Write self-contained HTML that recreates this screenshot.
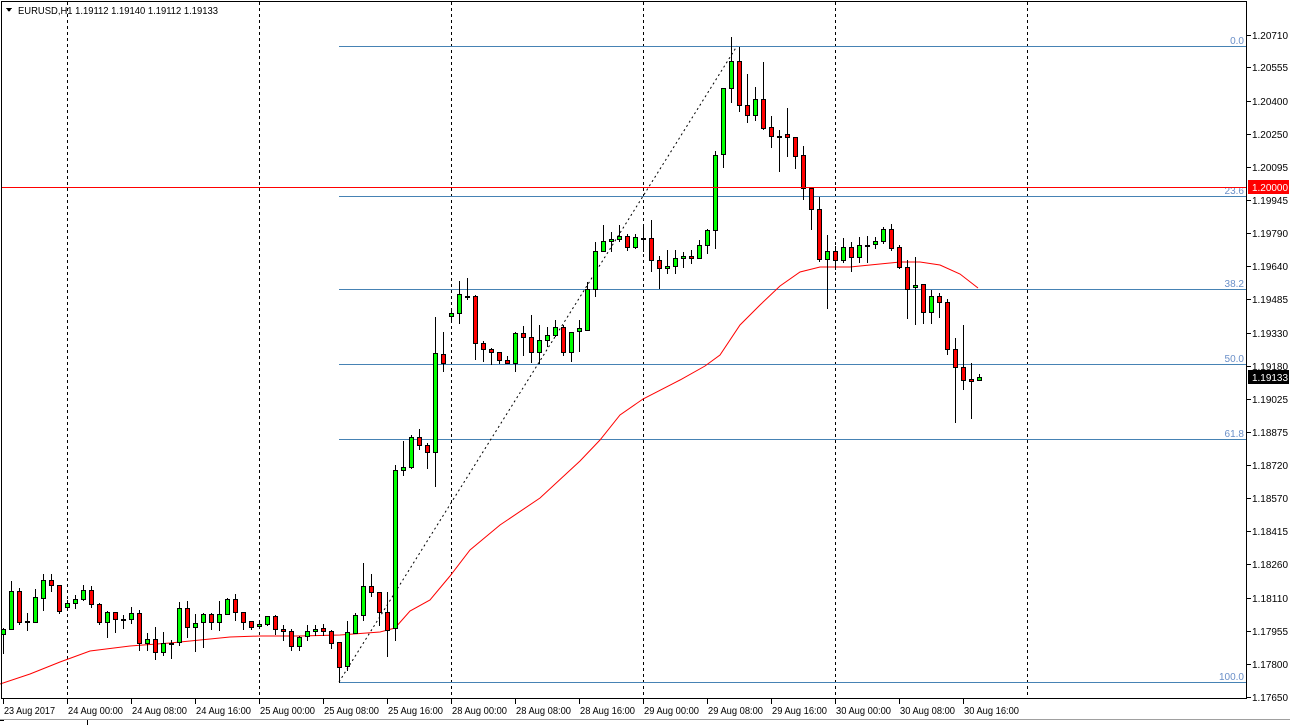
<!DOCTYPE html>
<html><head><meta charset="utf-8"><style>
html,body{margin:0;padding:0;background:#fff;width:1290px;height:725px;overflow:hidden}
svg{display:block;font-family:"Liberation Sans",sans-serif}
</style></head><body>
<svg id="c" width="1290" height="725" xmlns="http://www.w3.org/2000/svg" shape-rendering="crispEdges">
<rect width="1290" height="725" fill="#fff"/>
<g id="grid"></g>
<g id="fib"></g>
<polyline id="ma" fill="none" stroke="#f00" stroke-width="1" shape-rendering="auto"/>
<line x1="339" y1="682" x2="737" y2="46" stroke="#000" stroke-dasharray="2,3" shape-rendering="auto"/>
<g id="candles"></g>
<line x1="2" y1="187.5" x2="1246" y2="187.5" stroke="rgb(255,0,0)" stroke-width="1.2"/>
<rect x="1.5" y="1.5" width="1245" height="697" fill="none" stroke="#000"/>
<g id="axis" font-size="10" fill="#000"></g>
<text x="18" y="14" font-size="10" textLength="200" lengthAdjust="spacingAndGlyphs">EURUSD,H1  1.19112 1.19140 1.19112 1.19133</text>
<path d="M6 8 L12 8 L9 12 Z" fill="#000"/>
<line x1="0" y1="719.5" x2="1290" y2="719.5" stroke="#a0a0a0"/>
<line x1="87.5" y1="720" x2="87.5" y2="725" stroke="#000"/>
<line x1="0" y1="720.5" x2="4" y2="720.5" stroke="#000"/>
</svg>
<script>
var NS="http://www.w3.org/2000/svg";
function el(p,t,a,txt){var e=document.createElementNS(NS,t);for(var k in a)e.setAttribute(k,a[k]);if(txt!=null)e.textContent=txt;p.appendChild(e);return e;}
var grid=document.getElementById('grid');
[67,259,451,643,835,1027].forEach(function(x){el(grid,'line',{x1:x+.5,y1:2,x2:x+.5,y2:698,stroke:'#000','stroke-dasharray':'3,3'});});
var fib=document.getElementById('fib');
[[46,'0.0'],[196,'23.6'],[289,'38.2'],[364,'50.0'],[439,'61.8'],[682,'100.0']].forEach(function(f){
el(fib,'rect',{x:339,y:f[0],width:907,height:1,fill:'#4682B4'});
el(fib,'text',{x:1244,y:f[0]-2,'text-anchor':'end','font-size':'10',fill:'#6a8fc8'},f[1]);});
var ma=[[0,684],[30,674],[60,662],[90,651],[130,646],[170,643],[230,637],[260,636],[300,636],[340,635],[380,632],[395,628],[410,611],[430,600],[450,576],[470,550],[500,525],[540,498],[580,461],[600,440],[620,415],[643,399],[680,380],[705,366],[720,355],[740,325],[760,305],[780,286],[800,272],[820,267],[850,267],[870,265],[900,262],[920,262],[940,265],[960,274],[978,288]];
document.getElementById('ma').setAttribute('points',ma.map(function(p){return p.join(',')}).join(' '));
var D=[[634,629,628,653],[629,591,581,629],[591,622,588,624],[621,622,613,630],[622,597,589,622],[598,580,574,610],[580,585,574,591],[585,611,585,613],[607,603,600,610],[603,599,595,608],[599,590,585,600],[590,604,586,607],[604,622,603,624],[622,612,611,637],[612,619,612,632],[619,619.5,615,628],[619,613,607,623],[613,643,610,650],[643,639,633,650],[639,652,627,659],[652,643,632,655],[643,643.5,640,658],[642,608,602,645],[608,627,601,637],[627,623,614,651],[622,614,613,647],[614,622,613,629],[622,614,601,630],[614,599,598,614],[599,612,594,620],[612,622,612,629],[621,627,621,629],[626,624,622,628],[624,616,616,625],[616,629,615,634],[629,631,625,640],[631,646,629,650],[646,637,636,650],[636,631,625,640],[631,629,625,635],[628,631,624,635],[631,643,630,648],[642,667,642,682],[666,632,621,670],[633,615,613,633],[615,586,563,620],[586,592,574,596],[592,612,592,625],[612,630,592,656],[628,470,465,640],[470,467,441,475],[467,437,435,468],[437,445,429,449],[445,452,443,468],[452,353,317,486],[354,363,332,371],[316,313,310,322],[313,294,281,323],[296,296.5,278,299],[296,343,295,359],[343,349,341,361],[349,352,348,364],[352,360,352,363],[360,363,356,363],[363,333,332,371],[333,337,326,355],[337,352,315,362],[352,340,325,363],[340,335,327,346],[335,327,320,336],[327,352,325,355],[352,332,332,361],[331,328,320,351],[330,289,282,330],[289,251,242,296],[251,241,225,251],[241,239,232,251],[239,236,225,241],[236,247,234,250],[247,237,234,248],[238,238.5,224,251],[238,260,220,271],[260,268,256,288],[268,266,250,273],[266,258,250,273],[258,256,252,267],[256,258,250,263],[258,245,240,258],[245,230,229,253],[230,155,151,248],[154,88,88,167],[88,61,37,102],[61,105,47,111],[105,115,74,122],[115,99,87,120],[99,128,62,129],[127,136,116,147],[136,136.5,130,171],[134,137,108,156],[137,156,137,168],[155,188,146,199],[188,209,187,229],[209,259,197,261],[259,251,235,308],[251,260,246,269],[260,247,238,262],[247,257,242,271],[257,245,237,262],[245,245.5,236,262],[244,241,237,248],[241,229,227,243],[229,248,224,250],[247,267,245,268],[267,289,260,318],[287,285,257,324],[284,312,284,323],[312,296,290,323],[296,302,293,317],[302,349,299,354],[349,367,338,422],[367,380,325,389],[379,381,363,418],[380,377,374,380]];
var cg=document.getElementById('candles');
D.forEach(function(d,i){var cx=3+8*i;var o=d[0],c=d[1],h=d[2],l=d[3];
el(cg,'line',{x1:cx+.5,y1:h,x2:cx+.5,y2:l+1,stroke:'#000'});
var top=Math.round(Math.min(o,c)),bot=Math.round(Math.max(o,c));
if(bot-top<1){el(cg,'line',{x1:cx-2,y1:top+.5,x2:cx+3,y2:top+.5,stroke:'#000'});return;}
el(cg,'rect',{x:cx-1.5,y:top+.5,width:4,height:bot-top,fill:(c<o?'#00ff00':'#ff0000'),stroke:'#000'});});
var ax=document.getElementById('axis');
var L=['1.20710','1.20555','1.20400','1.20250','1.20095','1.19945','1.19790','1.19640','1.19485','1.19330','1.19180','1.19025','1.18875','1.18720','1.18570','1.18415','1.18260','1.18110','1.17955','1.17800','1.17650'];
var Y=[35,67,101,134,167,200,233,266,299,333,366,399,432,465,498,531,564,598,631,664,697];
L.forEach(function(t,i){el(ax,'line',{x1:1247,y1:Y[i]+.5,x2:1251,y2:Y[i]+.5,stroke:'#000'});el(ax,'text',{x:1252,y:Y[i]+4,textLength:36,lengthAdjust:'spacingAndGlyphs'},t);});
el(ax,'rect',{x:1248,y:180,width:41,height:14,fill:'#f00'});
el(ax,'text',{x:1252,y:191,fill:'#fff',textLength:36,lengthAdjust:'spacingAndGlyphs'},'1.20000');
el(ax,'rect',{x:1248,y:370,width:41,height:14,fill:'#000'});
el(ax,'text',{x:1252,y:381,fill:'#fff',textLength:36,lengthAdjust:'spacingAndGlyphs'},'1.19133');
var B=[[3,'23 Aug 2017'],[67,'24 Aug 00:00'],[131,'24 Aug 08:00'],[195,'24 Aug 16:00'],[259,'25 Aug 00:00'],[323,'25 Aug 08:00'],[387,'25 Aug 16:00'],[451,'28 Aug 00:00'],[515,'28 Aug 08:00'],[579,'28 Aug 16:00'],[643,'29 Aug 00:00'],[707,'29 Aug 08:00'],[771,'29 Aug 16:00'],[835,'30 Aug 00:00'],[899,'30 Aug 08:00'],[963,'30 Aug 16:00']];
B.forEach(function(b,i){el(ax,'line',{x1:b[0]+.5,y1:699,x2:b[0]+.5,y2:704,stroke:'#000'});el(ax,'text',{x:b[0]+1,y:714,textLength:(i==0?51:55),lengthAdjust:'spacingAndGlyphs'},b[1]);});
</script>
</body></html>
